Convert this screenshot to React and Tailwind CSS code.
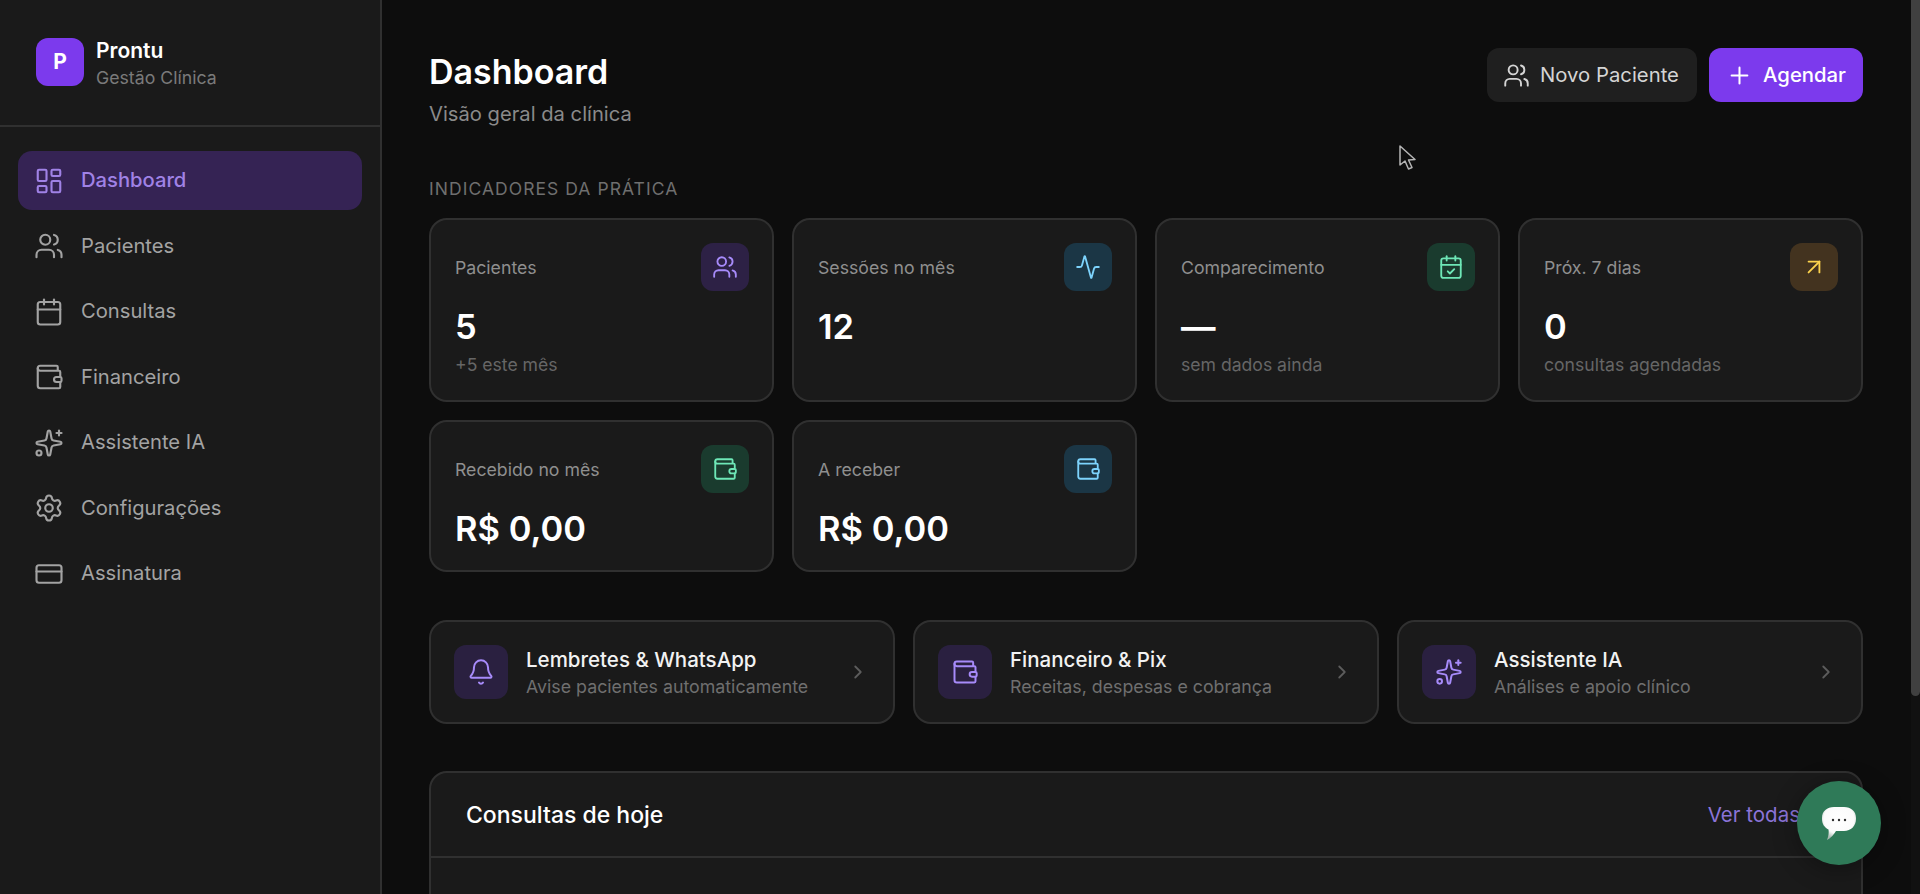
import React from 'react';
import {
  LayoutDashboard,
  Users,
  Calendar,
  Wallet,
  Sparkles,
  Settings,
  CreditCard,
  Activity,
  CalendarCheck,
  ArrowUpRight,
  Bell,
  ChevronRight,
  Plus,
} from 'lucide-react';

const navItems = [
  { label: 'Dashboard', icon: LayoutDashboard, active: true },
  { label: 'Pacientes', icon: Users },
  { label: 'Consultas', icon: Calendar },
  { label: 'Financeiro', icon: Wallet },
  { label: 'Assistente IA', icon: Sparkles },
  { label: 'Configurações', icon: Settings },
  { label: 'Assinatura', icon: CreditCard },
];

const statsTop = [
  { label: 'Pacientes', value: '5', sub: '+5 este mês', icon: Users, box: 'bg-[#2d2145]', color: 'text-[#a78bfa]' },
  { label: 'Sessões no mês', value: '12', icon: Activity, box: 'bg-[#1b3645]', color: 'text-[#7dd3fc]' },
  { label: 'Comparecimento', value: '—', sub: 'sem dados ainda', icon: CalendarCheck, box: 'bg-[#1a3b2e]', color: 'text-[#6ee7b7]' },
  { label: 'Próx. 7 dias', value: '0', sub: 'consultas agendadas', icon: ArrowUpRight, box: 'bg-[#43331f]', color: 'text-[#fcd34d]' },
];

const statsBottom = [
  { label: 'Recebido no mês', value: 'R$ 0,00', icon: Wallet, box: 'bg-[#1a3b2e]', color: 'text-[#6ee7b7]' },
  { label: 'A receber', value: 'R$ 0,00', icon: Wallet, box: 'bg-[#1b3645]', color: 'text-[#7dd3fc]' },
];

const shortcuts = [
  { title: 'Lembretes & WhatsApp', sub: 'Avise pacientes automaticamente', icon: Bell },
  { title: 'Financeiro & Pix', sub: 'Receitas, despesas e cobrança', icon: Wallet },
  { title: 'Assistente IA', sub: 'Análises e apoio clínico', icon: Sparkles },
];

const StatCard = ({ stat, tall }) => {
  const Icon = stat.icon;
  return (
    <div className={`${tall ? 'h-[184px]' : 'h-[152px]'} rounded-[18px] border-2 border-[#303030] bg-[#1a1a1a] px-[23px] pt-[23px]`}>
      <div className="flex items-start justify-between">
        <span className="ml-[1px] mt-[14px] text-[17.7px] leading-[22px] text-[#8f8f8f]">{stat.label}</span>
        <div className={`flex h-[48px] w-[48px] items-center justify-center rounded-[12px] ${stat.box}`}>
          <Icon className={`h-[26px] w-[26px] ${stat.color}`} strokeWidth={1.7} />
        </div>
      </div>
      <div className="ml-[1px] mt-[14px] text-[34.5px] font-semibold leading-[44px] text-white">{stat.value}</div>
      {stat.sub && <div className="ml-[1px] mt-[5px] text-[17.6px] leading-[22px] text-[#666666]">{stat.sub}</div>}
    </div>
  );
};

const App = () => {
  return (
    <div className="relative flex h-[894px] w-[1920px] overflow-hidden bg-[#0d0d0d] font-['Inter',sans-serif]">
      <aside className="h-full w-[382px] shrink-0 border-r-2 border-[#303030] bg-[#1a1a1a]">
        <div className="flex h-[127px] items-start gap-[12px] border-b-2 border-[#303030] pl-[36px] pt-[38px]">
          <div className="flex h-[48px] w-[48px] items-center justify-center rounded-[12px] bg-[#7c3aed] text-[21px] font-bold text-white">P</div>
          <div>
            <div className="text-[21px] font-semibold leading-[26px] text-white">Prontu</div>
            <div className="mt-[2px] text-[17.7px] leading-[24px] text-[#7a7a7a]">Gestão Clínica</div>
          </div>
        </div>
        <nav className="flex flex-col gap-[6.5px] px-[18px] pt-[24px]">
          {navItems.map((item) => {
            const Icon = item.icon;
            return (
              <div
                key={item.label}
                className={`flex h-[59px] items-center gap-[17px] rounded-[14px] pl-[16px] text-[20.2px] ${
                  item.active ? 'bg-[#352354] font-medium text-[#a082e6]' : 'text-[#a3a3a3]'
                }`}
              >
                <Icon className="h-[30px] w-[30px]" strokeWidth={1.7} />
                {item.label}
              </div>
            );
          })}
        </nav>
      </aside>

      <main className="h-full min-w-0 flex-1 pl-[47px] pr-[57px] pt-[48px]">
        <div className="flex items-start justify-between">
          <div>
            <h1 className="text-[34px] font-semibold leading-[48px] text-white">Dashboard</h1>
            <p className="mt-[3px] text-[20.2px] leading-[30px] text-[#8a8a8a]">Visão geral da clínica</p>
          </div>
          <div className="flex gap-[12px]">
            <button className="flex h-[54px] w-[210px] items-center justify-center gap-[10px] rounded-[12px] bg-[#1f1f1f] pr-[2px] text-[20.3px] text-[#d4d4d4]">
              <Users className="h-[27px] w-[27px]" strokeWidth={1.7} />
              Novo Paciente
            </button>
            <button className="flex h-[54px] w-[154px] items-center justify-center gap-[10px] rounded-[12px] bg-[#7c3aed] text-[20.3px] font-medium text-white">
              <Plus className="h-[27px] w-[27px]" strokeWidth={1.8} />
              Agendar
            </button>
          </div>
        </div>

        <div className="mt-[48px] text-[17.5px] uppercase leading-[24px] tracking-[0.06em] text-[#6f6f6f]">Indicadores da prática</div>

        <div className="mt-[17px] grid grid-cols-4 gap-[18px]">
          {statsTop.map((s) => <StatCard key={s.label} stat={s} tall />)}
          {statsBottom.map((s) => <StatCard key={s.label} stat={s} />)}
        </div>

        <div className="mt-[48px] grid grid-cols-3 gap-[18px]">
          {shortcuts.map((s) => {
            const Icon = s.icon;
            return (
              <div key={s.title} className="flex h-[104px] items-center rounded-[18px] border-2 border-[#303030] bg-[#1a1a1a] pl-[23px] pr-[24px]">
                <div className="flex h-[54px] w-[54px] shrink-0 items-center justify-center rounded-[12px] bg-[#2a2040]">
                  <Icon className="h-[28px] w-[28px] text-[#a78bfa]" strokeWidth={1.7} />
                </div>
                <div className="ml-[18px] min-w-0 flex-1 pt-[2px]">
                  <div className="text-[20.5px] font-medium leading-[28px] text-[#f2f2f2]">{s.title}</div>
                  <div className="text-[17.8px] leading-[26px] text-[#6f6f6f]">{s.sub}</div>
                </div>
                <ChevronRight className="h-[22px] w-[22px] text-[#5c5c5c]" strokeWidth={2} />
              </div>
            );
          })}
        </div>

        <div className="mt-[47px] h-[300px] rounded-[18px] border-2 border-[#303030] bg-[#1a1a1a]">
          <div className="flex h-[85px] items-center justify-between border-b-2 border-[#303030] pl-[35px] pr-[33px] pt-[2px]">
            <h2 className="text-[23px] font-medium text-white">Consultas de hoje</h2>
            <span className="flex items-center gap-[6px] text-[20.5px] text-[#8b74d8]">
              Ver todas
              <ChevronRight className="h-[22px] w-[22px]" strokeWidth={1.8} />
            </span>
          </div>
        </div>
      </main>

      {/* mouse pointer caught in the shot */}
      <svg className="absolute left-[1398px] top-[144px]" width="20" height="28" viewBox="0 0 20 28" fill="#0d0d0d" stroke="#b5b5b5" strokeWidth="1.5" strokeLinejoin="round">
        <path d="M2 2 L2 21 L7 17 L10.5 25 L14 23.5 L10.5 16 L17 15.5 Z" />
      </svg>

      {/* scrollbar */}
      <div className="absolute right-0 top-0 h-full w-[9px] bg-[#111111]">
        <div className="h-[696px] w-[9px] rounded-b-full bg-[#404040]" />
      </div>

      {/* chat bubble */}
      <div className="absolute left-[1797px] top-[781px] flex h-[84px] w-[84px] items-center justify-center rounded-full bg-[#2f7a58] shadow-[0_4px_24px_rgba(0,0,0,0.35)]">
        <svg width="36" height="36" viewBox="0 0 36 36">
          <defs>
            <radialGradient id="bubble" cx="50%" cy="36%" r="62%">
              <stop offset="0%" stopColor="#ffffff" />
              <stop offset="72%" stopColor="#fbfbfb" />
              <stop offset="100%" stopColor="#a9b8b0" />
            </radialGradient>
          </defs>
          <path d="M13 2 H23 C30 2 35 6 35 13 V14 C35 21 30 26 23 26 H15 C13 29 10 33 6 35 C7.500 31 8 28 7.500 24.500 C3.500 22.500 1 19 1 14 V13 C1 6 6 2 13 2 Z" fill="url(#bubble)" />
          <circle cx="12" cy="15" r="1.200" fill="#2e2e2e" />
          <circle cx="18" cy="15" r="1.200" fill="#2e2e2e" />
          <circle cx="24" cy="15" r="1.200" fill="#2e2e2e" />
        </svg>
      </div>
    </div>
  );
};

export default App;
